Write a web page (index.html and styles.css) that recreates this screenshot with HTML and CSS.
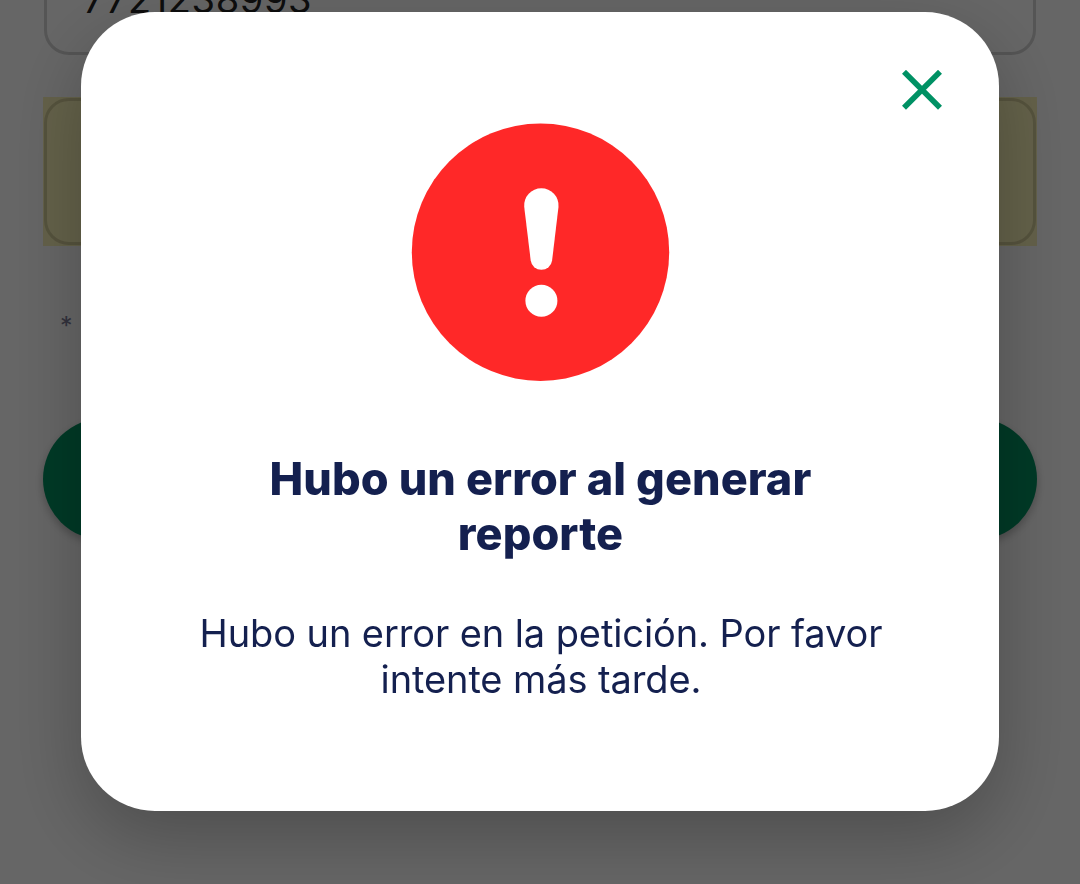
FILE: index.html
```html
<!DOCTYPE html>
<html lang="es">
<head>
    <meta charset="UTF-8">
    <meta name="viewport" content="width=device-width, initial-scale=1.0">
    <title>Reporte</title>
    <link rel="stylesheet" href="styles.css">
</head>
<body>
<div class="form">
    <div class="field">7721238993</div>
    <div class="autofill">
        <div class="field"></div>
    </div>
    <p class="note">*</p>
    <div class="submit"></div>
</div>

<div class="overlay">
    <div class="modal" role="dialog" aria-labelledby="modalTitle">
        <button class="close" aria-label="Cerrar">
            <svg width="40" height="40" viewBox="0 0 40 40">
                <path d="M2 1.8L38 37.8M38 1.8L2 37.8" stroke="#009164" stroke-width="5.6" fill="none"/>
            </svg>
        </button>
        <svg class="icon" width="260" height="260" viewBox="0 0 260 260">
            <circle cx="130.5" cy="130.2" r="128.7" fill="#ff2828"/>
            <path d="M114.2 84.8A17.2 17.2 0 1 1 148.5 84.8L142.1 138.5A10.8 10.8 0 0 1 120.7 138.5Z" fill="#fff"/>
            <circle cx="131.4" cy="178.7" r="16" fill="#fff"/>
        </svg>
        <h1 id="modalTitle">Hubo un error al generar reporte</h1>
        <p class="message">Hubo un error en la petición. Por favor intente más tarde.</p>
    </div>
</div>
</body>
</html>
```
FILE: styles.css
```css
* {
    box-sizing: border-box;
}
body {
    margin: 0;
    height: 884px;
    overflow: hidden;
    background-color: #ffffff;
    font-family: Inter, "Liberation Sans", sans-serif;
}
.form {
    display: flow-root;
    padding: 0 43px;
}
.field {
    height: 147px;
    margin: -92px 1px 0;
    padding: 65px 36px 0;
    border: 3px solid #d4d4d4;
    border-radius: 25px;
    font-size: 38px;
    font-weight: 400;
    line-height: 46px;
    letter-spacing: 0.6px;
    color: #222222;
}
.autofill {
    height: 149px;
    margin-top: 42px;
    padding: 1px 0;
    background-color: #faf3b8;
}
.autofill .field {
    margin: 0 1px;
    border-color: #d6cf9a;
}
.note {
    margin: 65px 0 0;
    padding-left: 17px;
    font-size: 25px;
    font-weight: 400;
    line-height: 30px;
    color: #7c7c98;
}
.submit {
    height: 122px;
    margin-top: 77px;
    border-radius: 61px;
    background-color: #009060;
    box-shadow: 0 4px 8px rgba(0, 0, 0, 0.25);
}
.overlay {
    position: fixed;
    inset: 0;
    display: flex;
    justify-content: center;
    align-items: flex-start;
    padding-top: 12px;
    background-color: rgba(0, 0, 0, 0.6);
}
.modal {
    display: flex;
    flex-direction: column;
    align-items: center;
    width: 918px;
    height: 798.5px;
    padding: 58px 57px 0;
    border-radius: 74px;
    background-color: #ffffff;
    box-shadow: 0 26px 76px rgba(0, 0, 0, 0.25);
    text-align: center;
    color: #14204f;
}
.close {
    align-self: flex-end;
    width: 40px;
    height: 40px;
    padding: 0;
    border: none;
    background: none;
}
.close svg {
    display: block;
}
.icon {
    margin-top: 12px;
    flex-shrink: 0;
}
h1 {
    width: 640px;
    margin: 69px 0 0;
    padding-left: 1px;
    font-size: 45px;
    font-weight: 800;
    line-height: 55px;
    letter-spacing: 0.08px;
}
.message {
    width: 720px;
    margin: 49px 0 0;
    padding-left: 2px;
    font-size: 38px;
    font-weight: 400;
    line-height: 46px;
    letter-spacing: -0.1px;
}
```
